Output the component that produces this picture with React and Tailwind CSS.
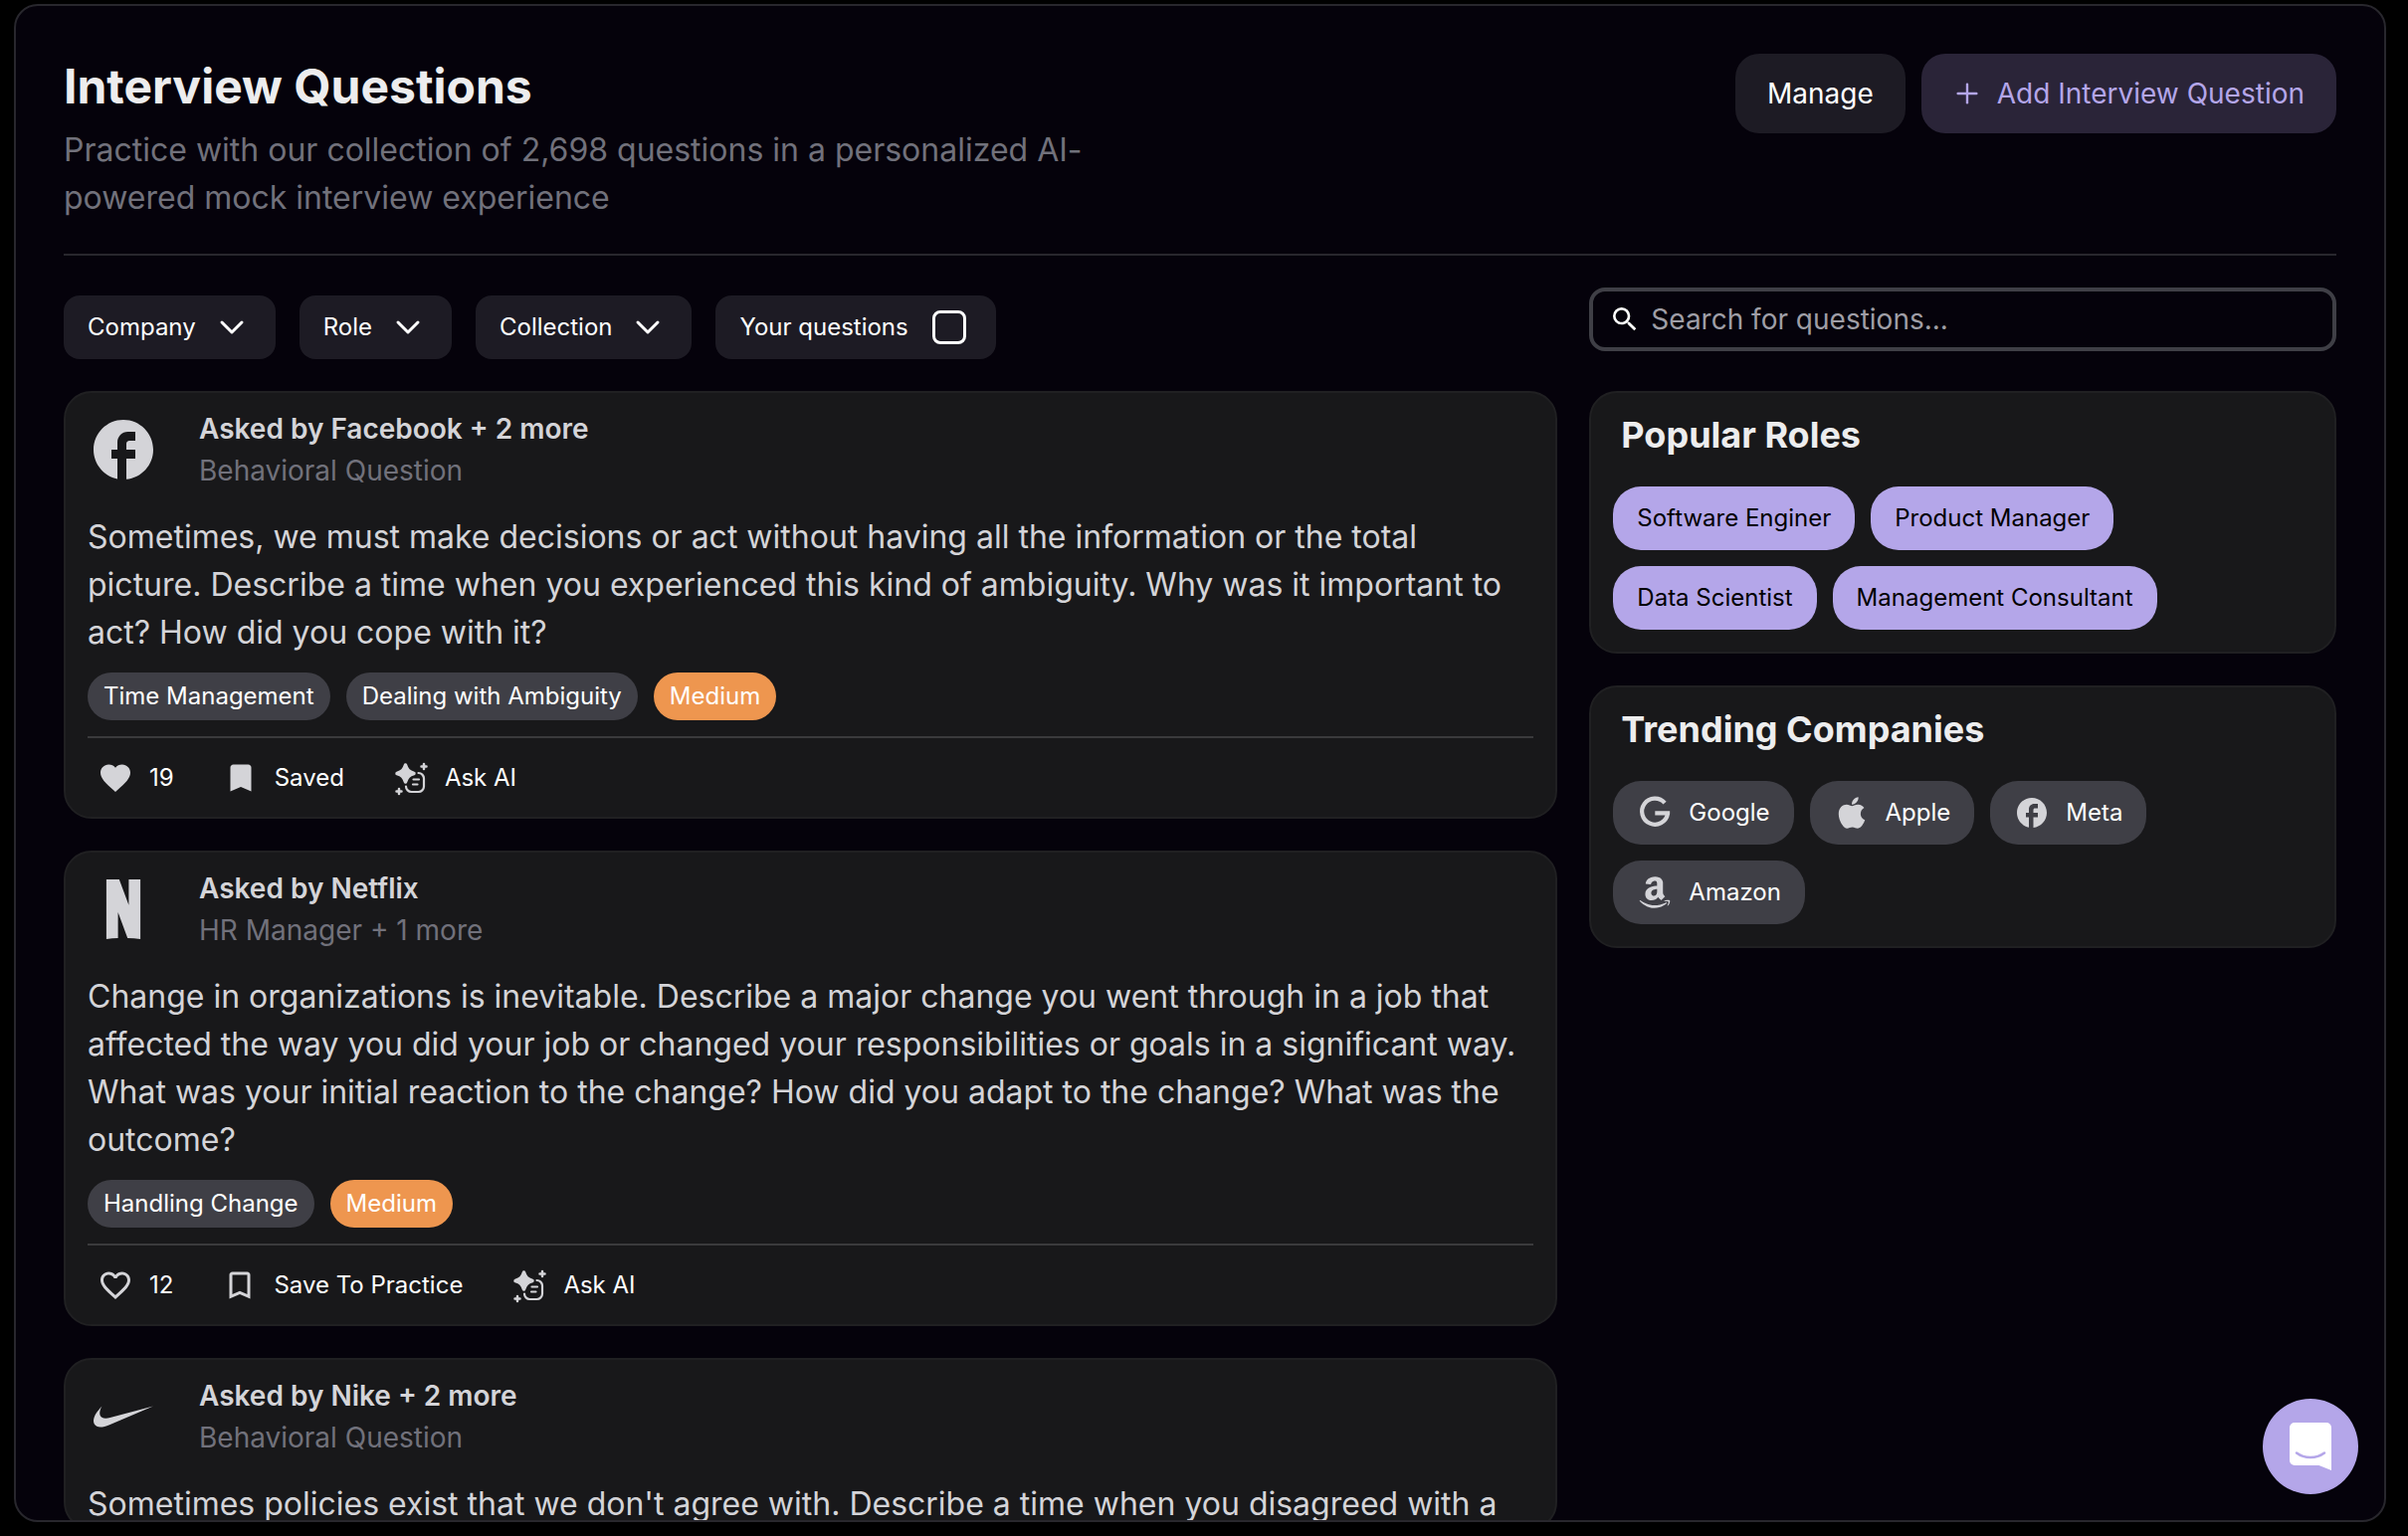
import { useState } from 'react';
import clsx from 'clsx';
import { ChevronDown, Plus } from 'lucide-react';
import {
  MdBookmark,
  MdFacebook,
  MdFavorite,
  MdFavoriteBorder,
  MdOutlineBookmarkBorder,
  MdSearch,
} from 'react-icons/md';
import { FaAmazon, FaApple } from 'react-icons/fa';
import { SiNike } from 'react-icons/si';

const NetflixIcon = ({ className }) => (
  <svg viewBox="0 0 24 24" fill="currentColor" className={className} aria-hidden="true">
    <path d="M6.3 2v20c1.300-.2 2.600-.3 3.900-.3v-8.700l3.200 8.700c1.500.05 2.900.15 4.300.3V2h-3.900v8.600L10.600 2z" />
  </svg>
);

const NikeIcon = ({ className }) => (
  <span className={clsx('flex items-center justify-center', className)}>
    <SiNike className="size-[60px]" />
  </span>
);

const GoogleIcon = ({ className }) => (
  <svg viewBox="0 0 24 24" fill="none" stroke="currentColor" strokeWidth="2.8" className={className} aria-hidden="true">
    <path d="M18.700 5.400A8.700 8.700 0 1 0 20.700 12.600V12.200H12.200" />
  </svg>
);

const AskAiIcon = ({ className }) => (
  <svg viewBox="0 0 36 36" fill="none" className={className} aria-hidden="true">
    <path
      d="M12.500 5c1.500 5 3.500 7 8.500 8.500-5 1.500-7 3.500-8.500 8.500-1.500-5-3.500-7-8.500-8.500 5-1.500 7-3.500 8.500-8.500z"
      fill="currentColor"
      stroke="currentColor"
      strokeWidth="3.500"
      strokeLinejoin="round"
    />
    <path
      d="M31 4v5M28.500 6.500h5M6 29v5M3.500 31.500h5"
      stroke="currentColor"
      strokeWidth="2.500"
      strokeLinecap="round"
    />
    <path
      d="M25.500 13a5.500 5.500 0 0 1 5.500 5.500v8a5.500 5.500 0 0 1-5.500 5.500H18.500a5.500 5.500 0 0 1-5.500-5.500M20.500 19.500h5.500M20 24.500h4.500"
      stroke="currentColor"
      strokeWidth="2.200"
      strokeLinecap="round"
    />
  </svg>
);

const questions = [
  {
    id: 'ambiguity',
    logo: MdFacebook,
    title: 'Asked by Facebook + 2 more',
    subtitle: 'Behavioral Question',
    text: 'Sometimes, we must make decisions or act without having all the information or the total picture. Describe a time when you experienced this kind of ambiguity. Why was it important to act? How did you cope with it?',
    tags: ['Time Management', 'Dealing with Ambiguity'],
    difficulty: 'Medium',
    likes: 19,
    saved: true,
  },
  {
    id: 'change',
    logo: NetflixIcon,
    title: 'Asked by Netflix',
    subtitle: 'HR Manager + 1 more',
    text: 'Change in organizations is inevitable. Describe a major change you went through in a job that affected the way you did your job or changed your responsibilities or goals in a significant way. What was your initial reaction to the change? How did you adapt to the change? What was the outcome?',
    tags: ['Handling Change'],
    difficulty: 'Medium',
    likes: 12,
    saved: false,
  },
  {
    id: 'policies',
    logo: NikeIcon,
    title: 'Asked by Nike + 2 more',
    subtitle: 'Behavioral Question',
    text: "Sometimes policies exist that we don't agree with. Describe a time when you disagreed with a",
    tags: [],
    saved: false,
  },
];

const roles = ['Software Enginer', 'Product Manager', 'Data Scientist', 'Management Consultant'];

const companies = [
  { name: 'Google', icon: GoogleIcon },
  { name: 'Apple', icon: FaApple },
  { name: 'Meta', icon: MdFacebook },
  { name: 'Amazon', icon: FaAmazon },
];

const FilterButton = ({ label }) => (
  <button
    type="button"
    className="flex h-16 items-center gap-4 rounded-2xl bg-[#1d1b24] px-6 text-2xl text-white"
  >
    {label}
    <ChevronDown className="size-10" strokeWidth={1.8} />
  </button>
);

const QuestionCard = ({ question }) => {
  const [liked, setLiked] = useState(question.saved);
  const [saved, setSaved] = useState(question.saved);
  const Logo = question.logo;
  const HeartIcon = liked ? MdFavorite : MdFavoriteBorder;
  const SaveIcon = saved ? MdBookmark : MdOutlineBookmarkBorder;

  return (
    <article className="shrink-0 rounded-[28px] border-2 border-[#202022] bg-[#18181a] px-[22px] pt-[15px] text-zinc-300">
      <div className="flex items-center gap-10">
        <Logo className="size-[72px] shrink-0" />
        <div className="text-[28px] leading-[42px]">
          <h2 className="font-semibold">{question.title}</h2>
          <p className="text-zinc-500">{question.subtitle}</p>
        </div>
      </div>
      <p className="mt-[22px] text-[32px] leading-[48px]">{question.text}</p>

      {question.tags.length > 0 && (
        <>
          <div className="mt-4 flex flex-wrap gap-4 text-2xl text-white">
            {question.tags.map((tag) => (
              <span key={tag} className="flex h-12 items-center rounded-full bg-[#3f3f46] px-4">
                {tag}
              </span>
            ))}
            <span className="flex h-12 items-center rounded-full bg-[#ee964f] px-4">
              {question.difficulty}
            </span>
          </div>

          {/* Actions */}
          <div className="mt-4 flex h-[81px] items-center gap-[29px] border-t-2 border-[#3a3a3c] text-2xl text-white">
            <button type="button" onClick={() => setLiked(!liked)} className="flex items-center gap-4 px-2.5">
              <HeartIcon className="size-9 text-zinc-300" />
              {question.likes}
            </button>
            <button type="button" onClick={() => setSaved(!saved)} className="flex items-center gap-4 px-2.5">
              <SaveIcon className="size-9 text-zinc-300" />
              {saved ? 'Saved' : 'Save To Practice'}
            </button>
            <button type="button" className="flex items-center gap-4 px-2.5">
              <AskAiIcon className="size-9 text-zinc-300" />
              Ask AI
            </button>
          </div>
        </>
      )}
    </article>
  );
};

const SideCard = ({ title, children }) => (
  <section className="rounded-[28px] border-2 border-[#202022] bg-[#18181a] px-[22px] pt-4 pb-[22px]">
    <h2 className="px-2 text-4xl leading-[52px] font-bold text-[#ededee]">{title}</h2>
    <div className="mt-[26px] flex flex-wrap gap-4">{children}</div>
  </section>
);

export default function App() {
  const [search, setSearch] = useState('');
  const [onlyMine, setOnlyMine] = useState(false);

  return (
    <div className="h-screen bg-black pt-1 pr-[22px] pb-3.5 pl-3.5 font-['Inter',sans-serif]">
      <main className="relative flex h-full flex-col overflow-hidden rounded-3xl border-2 border-[#28272d] bg-[#05020b] px-12 pt-12">
        <header className="flex items-start justify-between border-b-2 border-[#28272d] pb-8">
          <div className="max-w-[1040px]">
            <h1 className="text-5xl leading-[65px] font-bold text-[#ededee]">Interview Questions</h1>
            <p className="mt-2 text-[32px] leading-[48px] text-zinc-500">
              Practice with our collection of 2,698 questions in a personalized AI-powered mock interview experience
            </p>
          </div>
          <div className="flex shrink-0 gap-4 text-[28px]">
            <button type="button" className="h-20 rounded-3xl bg-[#1d1b24] px-8 text-white">
              Manage
            </button>
            <button
              type="button"
              className="flex h-20 items-center gap-3.5 rounded-3xl bg-[#2a2438] pr-8 pl-[30px] text-[#b4a6e9]"
            >
              <Plus className="size-8" strokeWidth={1.8} />
              Add Interview Question
            </button>
          </div>
        </header>

        <div className="grid min-h-0 grow grid-cols-[2fr_1fr] gap-8 pt-8">
          <div className="flex min-h-0 flex-col gap-8">
            <div className="mt-2 flex shrink-0 gap-6">
              <FilterButton label="Company" />
              <FilterButton label="Role" />
              <FilterButton label="Collection" />
              <label className="flex h-16 items-center gap-6 rounded-2xl bg-[#1d1b24] pr-[30px] pl-6 text-2xl text-white">
                Your questions
                <input
                  type="checkbox"
                  checked={onlyMine}
                  onChange={(e) => setOnlyMine(e.target.checked)}
                  className="size-[34px] appearance-none rounded-lg border-3 border-white checked:bg-[#b4a6e9]"
                />
              </label>
            </div>
            {questions.map((question) => (
              <QuestionCard key={question.id} question={question} />
            ))}
          </div>

          <aside className="flex flex-col gap-8">
            <label className="mb-2 flex h-16 items-center gap-2.5 rounded-2xl border-4 border-[#3f3f46] px-4 text-[28px]">
              <MdSearch className="size-8 shrink-0 text-white" />
              <input
                type="text"
                aria-label="Search for questions"
                placeholder="Search for questions..."
                value={search}
                onChange={(e) => setSearch(e.target.value)}
                className="w-full bg-transparent text-white outline-none placeholder:text-[#9f9ea6]"
              />
            </label>

            <SideCard title="Popular Roles">
              {roles.map((role) => (
                <button
                  key={role}
                  type="button"
                  className="h-16 rounded-[28px] bg-[#b4a6e9] px-6 text-2xl text-black"
                >
                  {role}
                </button>
              ))}
            </SideCard>

            <SideCard title="Trending Companies">
              {companies.map(({ name, icon: Icon }) => (
                <button
                  key={name}
                  type="button"
                  className="flex h-16 items-center gap-4 rounded-[28px] bg-[#3f3f46] px-6 text-2xl text-white"
                >
                  <Icon className="size-9 text-zinc-300" />
                  {name}
                </button>
              ))}
            </SideCard>
          </aside>
        </div>

        <button
          type="button"
          aria-label="Open chat"
          className="absolute right-[26px] bottom-[26px] flex size-24 items-center justify-center rounded-full bg-[#b4a6e9]"
        >
          <svg viewBox="0 0 42 48" className="h-12 w-[42px]" aria-hidden="true">
            <path d="M5 0h32a5 5 0 0 1 5 5v43l-12.500-5H5a5 5 0 0 1-5-5V5a5 5 0 0 1 5-5z" fill="#fff" />
            <path d="M7 30.500c8 6 20 6 28 0" fill="none" stroke="#b4a6e9" strokeWidth="2.500" strokeLinecap="round" />
          </svg>
        </button>
      </main>
    </div>
  );
}
